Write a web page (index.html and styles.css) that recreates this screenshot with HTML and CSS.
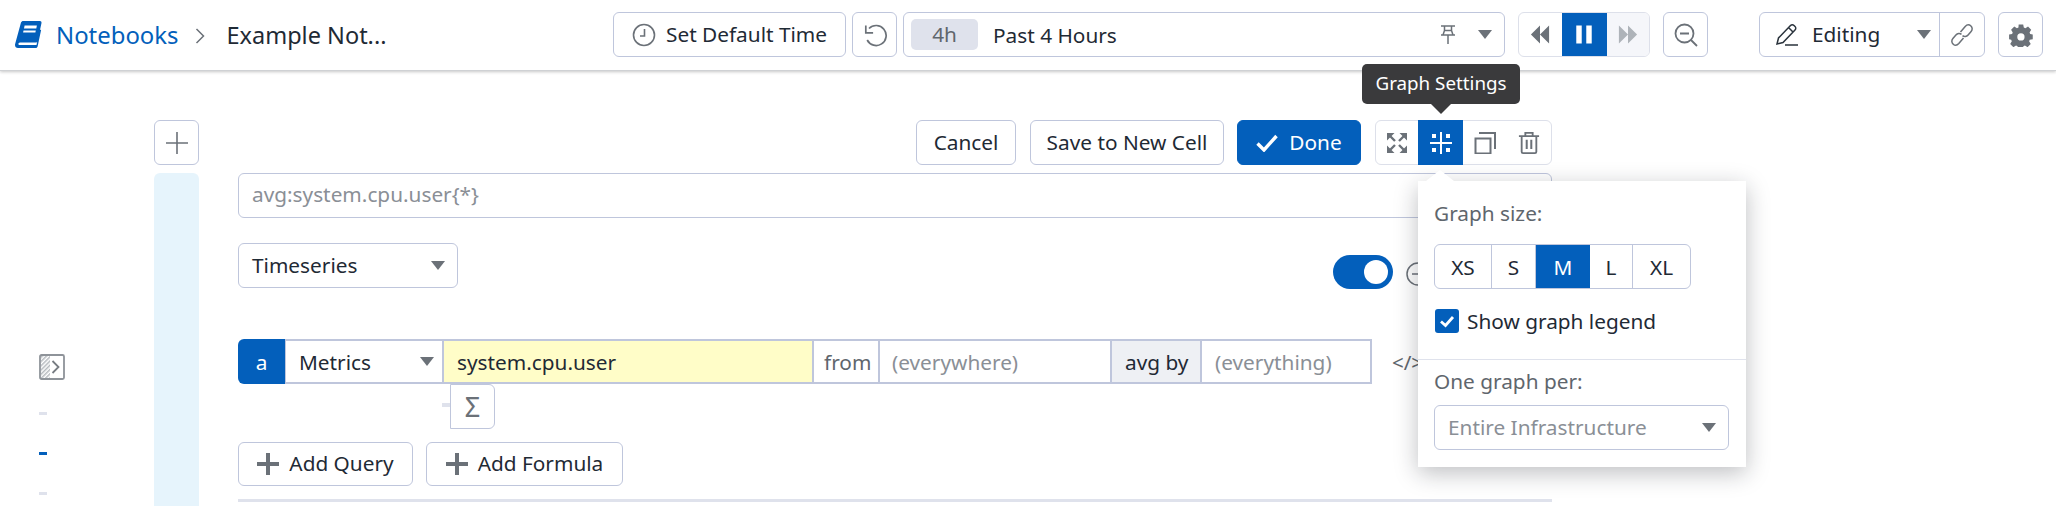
FILE: index.html
```html
<!DOCTYPE html>
<html lang="en">
<head>
<meta charset="utf-8">
<title>Example Notebook</title>
<link rel="stylesheet" href="styles.css">
</head>
<body>
<header class="topbar">
  <nav class="crumbs">
    <svg class="book" viewBox="0 0 27 27"><path fill="#035fbb" d="M6 1.500C6.400.6 7.200 0 8.200 0H25c1 0 1.700.9 1.500 1.900L22.600 20c-.2.9-1 1.600-2 1.600H5c-1 0-1.600.9-1.600 1.500s.6 1 1.400 1h16.700l3.400-15.600 1.200.4-3.500 16.600c-.2.9-.9 1.500-1.800 1.500H3c-1.800 0-3-1.400-3-3.100 0-.4.100-.8.200-1.200z"/><path fill="#fff" d="M9.600 4.500h12.300l-.6 3H9zM8.500 9.500h12.300l-.4 2H8.100z"/></svg>
    <a class="crumb-link">Notebooks</a>
    <svg class="crumb-sep" viewBox="0 0 10 18"><path d="M1.500 2l7 7-7 7" fill="none" stroke="#6b7178" stroke-width="1.500"/></svg>
    <span class="crumb-current">Example Not...</span>
  </nav>
  <button class="btn default-time">
    <svg class="ico-24" viewBox="0 0 24 24"><circle cx="12" cy="12" r="10.500" fill="none" stroke="#6b7178" stroke-width="1.600"/><path d="M12.500 6v7H8" fill="none" stroke="#6b7178" stroke-width="1.600"/></svg>
    Set Default Time
  </button>
  <button class="btn square reload">
    <svg class="ico-24" viewBox="0 0 24 24"><path d="M6 5.500A10 10 0 1 1 4.200 17" fill="none" stroke="#6b7178" stroke-width="1.700"/><path d="M2.800 2.500v7.300h7.300" fill="none" stroke="#6b7178" stroke-width="1.700"/></svg>
  </button>
  <div class="time-input">
    <span class="chip">4h</span>
    <span class="time-label">Past 4 Hours</span>
    <svg class="pin" viewBox="0 0 16 19"><path d="M1 1h14M4.500 1v4.500L3 10M11.500 1v4.500L13 10M4.500 5.500h7M1 10h14M8 10v9" fill="none" stroke="#6b7178" stroke-width="1.500"/></svg>
    <i class="caret"></i>
  </div>
  <div class="player">
    <span class="seg"><svg class="ico-player" viewBox="0 0 22 20"><path fill="#6b7178" d="M11 0v20L1 10zM21 0v20L11 10z"/></svg></span>
    <span class="seg seg-on"><svg class="ico-player" viewBox="0 0 22 20"><path fill="#fff" d="M2 0h6v20H2zM13 0h6v20h-6z" transform="translate(.5)"/></svg></span>
    <span class="seg seg-off"><svg class="ico-player" viewBox="0 0 22 20"><path fill="#aeb3b9" d="M1 0v20l10-10zM11 0v20l10-10z"/></svg></span>
  </div>
  <button class="btn square zoom-out">
    <svg class="ico-24" viewBox="0 0 24 24"><circle cx="10.500" cy="10.500" r="9" fill="none" stroke="#6b7178" stroke-width="1.800"/><path d="M6 10.500h9M17 17l6 6" fill="none" stroke="#6b7178" stroke-width="1.800"/></svg>
  </button>
  <div class="edit-group">
    <span class="edit-main">
      <svg class="pencil" viewBox="0 0 22 23"><path d="M1 21l1.500-6L14.500 2.500c1-1 2.500-1 3.500 0l1 1c1 1 1 2.500 0 3.500L7 19.500zM12.500 4.500l5 5M9 22h13" fill="none" stroke="#2a333c" stroke-width="1.500"/></svg>
      <span class="edit-label">Editing</span>
      <i class="caret"></i>
    </span>
    <span class="edit-link">
      <svg class="ico-24" viewBox="0 0 24 24"><g fill="none" stroke="#6b7178" stroke-width="1.500"><path d="M10.500 9l4.700-5.600c1.600-1.800 4-2 5.600-.6 1.700 1.400 1.800 3.900.3 5.700l-3 3.500c-1.500 1.800-4 2-5.600.6"/><path d="M13.500 15l-4.700 5.600c-1.600 1.800-4 2-5.600.6-1.700-1.400-1.800-3.900-.3-5.700l3-3.500c1.500-1.800 4-2 5.600-.6"/></g></svg>
    </span>
  </div>
  <button class="btn square gear">
    <svg class="ico-24" viewBox="0 0 24 24"><path fill="#6b7178" fill-rule="evenodd" d="M9.500 0h5l.7 3.300 1.700.7L19.800 2.200l3.500 3.500-1.800 2.900.7 1.700L25 11v5l-3.300.7-.7 1.700 1.800 2.900-3.500 3.500-2.900-1.800-1.700.7-.7 3.300h-5l-.7-3.300-1.700-.7-2.900 1.800-3.500-3.500 1.800-2.900-.7-1.700L-1 16v-5l3.300-.7.7-1.700-1.800-2.900 3.500-3.500 2.900 1.800 1.700-.7zM12 9.500a4 4 0 1 0 0 8 4 4 0 0 0 0-8z" transform="translate(1 1.600) scale(.91)"/></svg>
  </button>
</header>

<main class="page">
  <aside class="rail">
    <svg class="rail-icon" viewBox="0 0 26 26"><defs><pattern id="hatch" width="3" height="3" patternUnits="userSpaceOnUse" patternTransform="rotate(45)"><rect width="1.500" height="3" fill="#b5b9be"/></pattern></defs><rect x="1" y="1" width="24" height="24" rx="1.500" fill="#fff" stroke="#8e9399" stroke-width="1.800"/><rect x="2" y="2" width="9" height="22" fill="url(#hatch)"/><path d="M13.500 7l6 6-6 6" fill="none" stroke="#777c82" stroke-width="1.800"/></svg>
    <span class="dash"></span>
    <span class="dash dash-on"></span>
    <span class="dash"></span>
  </aside>
  <section class="cell">
    <div class="cell-actions">
      <button class="btn square add-cell">
        <svg class="ico-24" viewBox="0 0 24 24"><path d="M12 1v22M1 12h22" stroke="#6b7178" stroke-width="1.600"/></svg>
      </button>
      <div class="action-buttons">
        <button class="btn cancel">Cancel</button>
        <button class="btn save">Save to New Cell</button>
        <button class="btn done">
          <svg class="check" viewBox="0 0 22 18"><path d="M1.500 9.500l6.500 6.500L20.500 2" fill="none" stroke="#fff" stroke-width="3.400"/></svg>
          Done
        </button>
        <div class="tools">
          <span class="tool tool-first"><svg class="ico-22" viewBox="0 0 22 22"><g fill="#6b7178"><path d="M1 1h7.500L1 8.500zM21 1v7.500L13.500 1zM1 21v-7.500L8.500 21zM21 21h-7.500l7.500-7.500z"/></g><path d="M3 3l6 6M19 3l-6 6M3 19l6-6M19 19l-6-6" stroke="#6b7178" stroke-width="2.400"/></svg></span>
          <span class="tool tool-on"><svg class="ico-22" viewBox="0 0 22 22"><path fill="#fff" d="M2 2h4v4H2zM16 2h4v4h-4zM2 16h4v4H2zM16 16h4v4h-4zM10 0h2v22h-2zM0 10h22v2H0z"/></svg></span>
          <span class="tool"><svg class="ico-22" viewBox="0 0 22 22"><path d="M1.500 6.500h15v15h-15zM5 1h16v16" fill="none" stroke="#6b7178" stroke-width="2"/></svg></span>
          <span class="tool"><svg class="ico-22" viewBox="0 0 22 24"><path d="M0 4.500h22M7 4V1h8v3M3 5v16.500c0 1 .7 1.500 1.500 1.500h13c.8 0 1.500-.5 1.500-1.500V5" fill="none" stroke="#6b7178" stroke-width="2"/><path d="M8.500 8.500v10M13.500 8.500v10" stroke="#6b7178" stroke-width="2.200"/></svg></span>
        </div>
        <div class="tooltip">Graph Settings</div>
      </div>
    </div>
    <div class="cell-body">
      <div class="strip"></div>
      <div class="editor">
        <div class="field">avg:system.cpu.user{*}</div>
        <div class="type-row">
          <div class="select type-select">Timeseries<i class="caret"></i></div>
          <span class="toggle"><i class="knob"></i></span>
          <svg class="toggle-info" viewBox="0 0 24 24"><circle cx="12" cy="12" r="11" fill="none" stroke="#6b7178" stroke-width="1.500"/><path d="M6 12h12" stroke="#6b7178" stroke-width="1.500"/></svg>
        </div>
        <div class="query-row">
          <span class="q-letter">a</span>
          <span class="q-source">Metrics<i class="caret"></i></span>
          <span class="q-metric">system.cpu.user</span>
          <span class="q-from">from</span>
          <span class="q-scope">(everywhere)</span>
          <span class="q-avg">avg by</span>
          <span class="q-group">(everything)</span>
          <span class="q-code">&lt;/&gt;</span>
        </div>
        <div class="sigma-row">
          <span class="sigma-link"></span>
          <span class="sigma">Σ</span>
        </div>
        <div class="add-row">
          <button class="btn add"><svg class="ico-22" viewBox="0 0 22 22"><path d="M11 0v22M0 11h22" stroke="#6b7178" stroke-width="4"/></svg>Add Query</button>
          <button class="btn add"><svg class="ico-22" viewBox="0 0 22 22"><path d="M11 0v22M0 11h22" stroke="#6b7178" stroke-width="4"/></svg>Add Formula</button>
        </div>
        <div class="rule"></div>
      </div>
    </div>
  </section>
</main>

<div class="popover">
  <span class="pop-label">Graph size:</span>
  <div class="sizes">
    <span class="size size-xs">XS</span>
    <span class="size size-s">S</span>
    <span class="size size-m">M</span>
    <span class="size size-l">L</span>
    <span class="size size-xl">XL</span>
  </div>
  <label class="legend">
    <svg class="box" viewBox="0 0 24 24"><rect width="24" height="24" rx="3" fill="#035fbb"/><path d="M6 12.500l4.500 4 7.500-8.500" fill="none" stroke="#fff" stroke-width="2.800"/></svg>
    Show graph legend
  </label>
  <div class="pop-divider"></div>
  <span class="pop-label per">One graph per:</span>
  <div class="select per-select">Entire Infrastructure<i class="caret"></i></div>
</div>
</body>
</html>
```

FILE: styles.css
```css
* { box-sizing: border-box; }
html, body { margin: 0; height: 506px; overflow: hidden; }
body {
  position: relative;
  background: #fff;
  color: #1f2a35;
  font-family: "Noto Sans", sans-serif;
  font-size: 20.8px;
}
svg { display: block; flex: none; }
.ico-24 { width: 24px; height: 24px; }
.ico-22 { width: 22px; height: 22px; }

.btn {
  display: inline-flex;
  align-items: center;
  justify-content: center;
  height: 45px;
  padding: 0 0 2px;
  border: 1px solid #bfc6dc;
  border-radius: 6px;
  background: #fff;
  color: inherit;
  font: inherit;
}
.btn svg { margin-top: 2px; }
.square { width: 45px; }

.caret {
  display: block;
  flex: none;
  width: 0;
  height: 0;
  border-left: 7.500px solid transparent;
  border-right: 7.500px solid transparent;
  border-top: 9px solid #6b7178;
}

/* top bar */
.topbar {
  display: flex;
  align-items: center;
  height: 71px;
  padding: 0 0 1px 15px;
  border-bottom: 1px solid #cfd1d4;
  box-shadow: 0 1px 3px rgba(0, 0, 0, .22);
  position: relative;
}
.crumbs { display: flex; align-items: center; width: 598px; }
.book { width: 27px; height: 27px; margin-right: 14px; }
.crumb-link { color: #035fbb; font-size: 23.900px; }
.crumb-sep { width: 10px; height: 18px; margin: 2px 22px 0 16px; }
.crumb-current { font-size: 23.500px; }
.default-time { width: 233px; gap: 10px; }
.reload { margin-left: 6px; }
.time-input {
  display: flex;
  align-items: center;
  width: 602px;
  height: 45px;
  margin-left: 6px;
  padding: 0 12px 0 7px;
  border: 1px solid #bfc6dc;
  border-radius: 6px;
}
.chip {
  width: 67px;
  height: 31px;
  border-radius: 5px;
  background: #dfe2ec;
  color: #5f666d;
  text-align: center;
  line-height: 31px;
}
.time-label { margin-left: 15px; flex: 1; }
.pin { width: 16px; height: 19px; margin-right: 22px; }
.player {
  display: flex;
  width: 132px;
  height: 45px;
  margin-left: 13px;
  border: 1px solid #dde0ea;
  border-radius: 6px;
  overflow: hidden;
}
.seg { flex: 1; display: flex; align-items: center; justify-content: center; }
.seg-on { background: #035fbb; flex: none; width: 45px; }
.seg-off { background: #f5f6fa; }
.ico-player { width: 20px; height: 19px; }
.zoom-out { margin-left: 13px; }
.edit-group {
  display: flex;
  width: 226px;
  height: 45px;
  margin-left: 51px;
  border: 1px solid #bfc6dc;
  border-radius: 6px;
}
.edit-main {
  display: flex;
  align-items: center;
  flex: 1;
  padding: 0 8px 0 16px;
  border-right: 1px solid #bfc6dc;
}
.pencil { width: 22px; height: 23px; }
.edit-label { margin-left: 14px; flex: 1; padding-bottom: 2px; }
.edit-link { display: flex; align-items: center; justify-content: center; width: 44px; }
.gear { margin-left: 13px; }

/* page */
.page { display: flex; height: 435px; }
.rail {
  display: flex;
  flex-direction: column;
  align-items: flex-start;
  width: 154px;
  padding: 283px 0 0 39px;
}
.rail-icon { width: 26px; height: 26px; margin-bottom: 32px; }
.dash { flex: none; width: 8px; height: 3px; margin-bottom: 37px; background: #dfe2ec; }
.dash:last-child { margin-bottom: 0; }
.dash-on { background: #035fbb; }
.cell { width: 1398px; padding-top: 49px; display: flex; flex-direction: column; }
.cell-actions { display: flex; justify-content: space-between; }
.action-buttons { display: flex; position: relative; }
.cancel { width: 100px; }
.save { width: 194px; margin-left: 14px; }
.done {
  width: 124px;
  margin-left: 13px;
  gap: 11px;
  background: #035fbb;
  border-color: #035fbb;
  color: #fff;
}
.check { width: 22px; height: 18px; }
.tools {
  display: flex;
  width: 177px;
  height: 45px;
  margin-left: 14px;
  border: 1px solid #dde0ea;
  border-radius: 6px;
}
.tool { display: flex; align-items: center; justify-content: center; width: 44px; }
.tool-first { width: 42px; }
.tool-on { background: #035fbb; height: 45px; margin-top: -1px; width: 45px; }
.tooltip {
  position: absolute;
  top: -56px;
  right: 32px;
  width: 158px;
  height: 40px;
  border-radius: 5px;
  background: #3a3a3c;
  color: #fff;
  font-size: 18.800px;
  line-height: 38px;
  text-align: center;
}
.tooltip::after {
  content: "";
  position: absolute;
  left: 69px;
  top: 40px;
  border-left: 10px solid transparent;
  border-right: 10px solid transparent;
  border-top: 10px solid #3a3a3c;
}
.cell-body { display: flex; flex: 1; margin-top: 8px; }
.strip { width: 45px; background: #e6f4fc; border-radius: 6px 6px 0 0; }
.editor { flex: 1; padding-left: 39px; }
.field {
  height: 45px;
  padding-left: 13px;
  border: 1px solid #bfc6dc;
  border-radius: 6px;
  color: #8a8f96;
  line-height: 41px;
}
.select {
  display: flex;
  align-items: center;
  justify-content: space-between;
  height: 45px;
  padding: 0 12px 2px 13px;
  border: 1px solid #bfc6dc;
  border-radius: 6px;
}
.select .caret { margin-top: 2px; }
.type-row { display: flex; align-items: flex-start; margin-top: 25px; height: 45px; }
.type-select { width: 220px; }
.toggle {
  display: block;
  width: 60px;
  height: 34px;
  margin: 12px 0 0 875px;
  padding: 5px 0 0 31px;
  border-radius: 17px;
  background: #035fbb;
}
.knob { display: block; width: 24px; height: 24px; border-radius: 50%; background: #fff; }
.toggle-info { width: 24px; height: 24px; margin: 19px 0 0 13px; }
.query-row { display: flex; height: 45px; margin-top: 51px; position: relative; }
.query-row span {
  display: flex;
  align-items: center;
  border: 2px solid #bfc6dc;
  border-left-width: 0;
}
.query-row .q-letter {
  justify-content: center;
  width: 47px;
  border: 0;
  border-radius: 6px 0 0 6px;
  background: #035fbb;
  color: #fff;
}
.query-row .q-source {
  justify-content: space-between;
  width: 159px;
  padding: 0 8px 0 13px;
  border-left: 1px solid #bfc6dc;
}
.q-metric { width: 370px; padding-left: 13px; background: #fffdc8; }
.q-from { width: 66px; padding-left: 10px; color: #5f666d; }
.q-scope { width: 232px; padding-left: 12px; color: #8a8f96; }
.q-avg { width: 90px; padding-left: 13px; background: #eef0f4; }
.q-group { width: 170px; padding-left: 13px; color: #8a8f96; }
.query-row .q-code { border: 0; margin-left: 20px; color: #5f666d; font-size: 20.500px; }
.sigma-row { display: flex; align-items: center; padding-left: 204px; }
.sigma-link { width: 8px; height: 4px; margin-top: -3px; background: #dfe2ec; }
.sigma {
  display: flex;
  align-items: center;
  justify-content: center;
  width: 45px;
  height: 45px;
  border: 1px solid #bfc6dc;
  border-radius: 0 6px 6px 0;
  color: #6b7178;
  font-size: 27px;
}
.add-row { display: flex; gap: 13px; margin-top: 13px; }
.add { gap: 10px; height: 44px; }
.add-row .add:first-child { width: 175px; }
.add-row .add:last-child { width: 197px; }
.rule { height: 3px; margin-top: 13px; background: #dfe2ec; }

/* popover */
.popover {
  position: absolute;
  left: 1418px;
  top: 181px;
  display: flex;
  flex-direction: column;
  align-items: flex-start;
  width: 328px;
  height: 286px;
  padding: 16px 16px 0;
  background: #fff;
  box-shadow: 0 6px 22px rgba(20, 25, 35, .28);
}
.popover::before {
  content: "";
  position: absolute;
  left: 8px;
  top: -11px;
  width: 28px;
  height: 11px;
  background: #fff;
  clip-path: polygon(50% 0, 100% 100%, 0 100%);
}
.pop-label { color: #5f666d; line-height: 32px; }
.sizes {
  display: flex;
  height: 45px;
  margin-top: 15px;
  border: 1px solid #bfc6dc;
  border-radius: 6px;
  overflow: hidden;
}
.size {
  display: flex;
  align-items: center;
  justify-content: center;
  border-right: 1px solid #bfc6dc;
}
.size-xs { width: 57px; }
.size-s { width: 44px; }
.size-m { width: 54px; background: #035fbb; color: #fff; border-right: 0; }
.size-l { width: 43px; }
.size-xl { width: 57px; border-right: 0; }
.legend { display: flex; align-items: center; gap: 8px; margin: 18px 0 0 1px; }
.box { width: 24px; height: 24px; }
.pop-divider { align-self: stretch; height: 1px; margin: 24px -16px 0; background: #dfe2ec; }
.per { margin-top: 5px; }
.per-select { width: 295px; margin-top: 8px; color: #8a8f96; }
.per-select .caret { border-left-width: 7px; border-right-width: 7px; }
```
